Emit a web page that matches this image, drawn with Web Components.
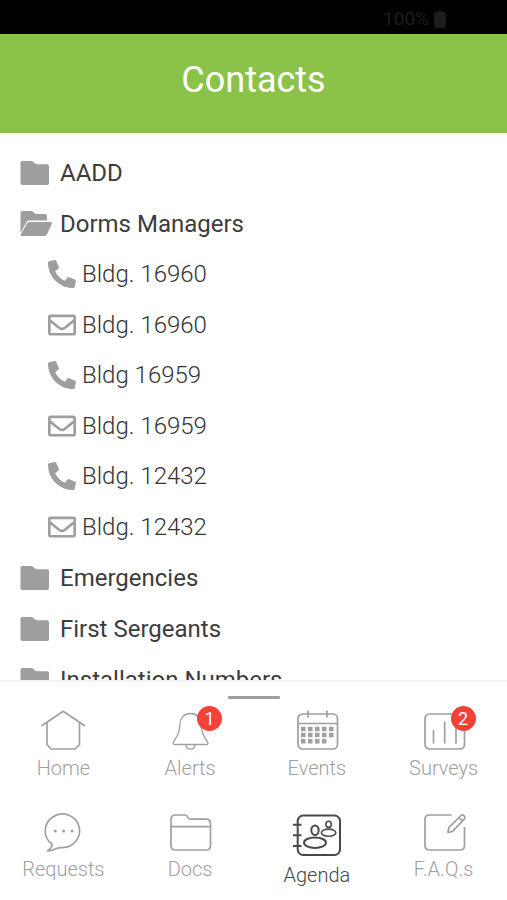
<!DOCTYPE html>
<html lang="en">
<head>
<meta charset="utf-8">
<meta name="viewport" content="width=device-width, initial-scale=1">
<title>Contacts</title>
<style>
body{margin:0;background:#fff;color:#333;font-family:Roboto,"Liberation Sans",sans-serif;font-weight:300}
</style>
</head>
<body>
<contacts-app></contacts-app>
<script>
const glyphs = {
  folder: ['0 0 32 26', '<path fill="currentColor" d="M2.500 1H11c1 0 1.700.300 2.400 1L15 3.500c.5.5 1 .7 1.800.7H27c1.200 0 2 .8 2 2V23c0 1.200-.8 2-2 2H2.500c-1.200 0-2-.8-2-2V3c0-1.200.8-2 2-2z"/>'],
  open: ['0 0 32 26', '<path fill="currentColor" d="M2.500 0H11c1 0 1.500.300 2.200 1L14.500 2.300c.5.5 1 .7 1.700.7H25c1.200 0 2 .8 2 2v4.500H9.500c-1.500 0-2.500.6-3.200 1.900L.5 22V2c0-1.200.8-2 2-2z"/><path fill="currentColor" d="M9.700 11H30.500c1.300 0 1.900.8 1.300 2L27 23.200C26.400 24.400 25.500 25 24.200 25H2c-1.200 0-1.700-.6-1.200-1.600L7 12.500C7.600 11.500 8.500 11 9.700 11z"/>'],
  phone: ['0 0 512 512', '<path fill="currentColor" d="M497.390 361.800l-112-48a24 24 0 0 0-28 6.900l-49.600 60.600A370.660 370.660 0 0 1 130.600 204.110l60.600-49.600a23.940 23.940 0 0 0 6.900-28l-48-112A24.160 24.160 0 0 0 122.600.61l-104 24A24 24 0 0 0 0 48c0 256.500 207.900 464 464 464a24 24 0 0 0 23.400-18.600l24-104a24.290 24.290 0 0 0-14.010-27.600z"/>'],
  mail: ['0 0 512 512', '<path fill="currentColor" d="M464 64H48C21.490 64 0 85.490 0 112v288c0 26.510 21.490 48 48 48h416c26.510 0 48-21.490 48-48V112c0-26.510-21.490-48-48-48zm0 48v40.805c-22.422 18.259-58.168 46.651-134.587 106.490-16.841 13.247-50.201 45.072-73.413 44.701-23.208.375-56.579-31.459-73.413-44.701C106.180 199.465 70.425 171.067 48 152.805V112h416zM48 400V214.398c22.914 18.251 55.409 43.862 104.938 82.646 21.857 17.205 60.134 55.186 103.062 54.955 42.717.231 80.509-37.199 103.053-54.947 49.528-38.783 82.032-64.401 104.947-82.653V400H48z"/>'],
  battery: ['0 0 12 18', '<path fill="currentColor" d="M3.500 1h5v1H10q2 0 2 2v12q0 2-2 2H2q-2 0-2-2V4q0-2 1.500-2h2z"/>'],
  home: ['0 0 52 42', '<path d="M4.500 17 26.200 2.300 48 17M10 14v21.500l4 4.500h24l4.500-4.500V14"/>'],
  bell: ['0 0 52 42', '<path stroke-width="1.300" d="M26.500 4.500C20 4.500 16.300 9 16 14.500c-.2 6.500-1 9.500-4 14.500-1.300 2.200-2.600 3.600-2.800 5-.1 1 .6 1.500 1.500 1.500H42.500c1 0 1.600-.6 1.400-1.500-.3-1.400-1.600-2.800-2.900-5-3-5-3.700-8-4-14.500C36.700 9 33 4.500 26.500 4.500zM22 36c0 5.500 9 5.500 9 0"/>'],
  events: ['0 0 52 42', '<rect x="7" y="5" width="39.500" height="35" rx="4.500"/><path d="M7 14.500h39.500M17 1.500v7M36 1.500v7"/><path stroke-width="4.500" stroke-dasharray="4.500 2.500" d="M10 20h33M10 26h33M10 32.200h26"/>'],
  surveys: ['0 0 52 42', '<rect x="7" y="5" width="39.500" height="35" rx="4.500"/><path d="M15.500 21v13.500M26.700 12.500v22M38 17v17.500"/>'],
  requests: ['0 0 52 42', '<path d="M15 34.200A17.200 16.800 0 1 1 24.500 37.600C20 37 17 41 10.500 40.800C13.500 38.500 15.600 36.500 15 34.200z"/><path stroke-linecap="round" stroke-width="3" d="M18.200 21h.01M26.500 21h.01M35 21h.01"/>'],
  docs: ['0 0 52 42', '<path d="M11.500 5H21c1.500 0 2.200.5 2.700 2 .5 1.600 1 2.200 2.600 2.200H42c3 0 4.500 1.500 4.500 4.500V35.500c0 3-1.500 4.500-4.500 4.500H11.500C8.500 40 7 38.500 7 35.500v-26C7 6.500 8.500 5 11.500 5zM7 16.700h39.500"/>'],
  agenda: ['0 0 52 48', '<g stroke-width="2"><rect x="6.700" y="5.500" width="42.300" height="39.500" rx="5.500"/><path d="M2 14.700h8.500M2 25.300h8.500M2 36h8.500"/><ellipse cx="24" cy="20.300" rx="3.700" ry="4.700"/><ellipse cx="24" cy="32.700" rx="11" ry="5.200"/></g><g stroke-width="1.600"><ellipse cx="37.600" cy="14.300" rx="2.700" ry="3.100"/><ellipse cx="37.600" cy="22.700" rx="7.200" ry="3.600"/></g>'],
  faqs: ['0 0 52 42', '<path d="M33.500 5H11.500C8.500 5 7 6.500 7 9.500v26C7 38.500 8.500 40 11.500 40H42c3 0 4.500-1.500 4.500-4.500V17"/><path d="M30 22.500l.8-4.800L42.500 6c2.600-2.600 6 .8 3.500 3.400L34.500 21.400zM41 7.500l3.500 3.500"/>']
};
const glyph = name => `<svg viewBox="${glyphs[name][0]}" aria-hidden="true">${glyphs[name][1]}</svg>`;

function define(tag, render, setup) {
  customElements.define(tag, class extends HTMLElement {
    connectedCallback() {
      if (this.shadowRoot) return;
      this.attachShadow({mode: 'open'}).innerHTML = render(this);
      if (setup) setup(this);
    }
  });
}

define('status-bar', () => `
  <style>
    :host{display:flex;justify-content:flex-end;align-items:center;gap:5px;height:34px;padding:3px 61px 0 0;box-sizing:border-box;background:#000;color:#1d1d1d;font-size:19px;font-weight:400;line-height:24px}
    svg{width:12px;height:18px;display:block}
  </style><slot></slot>${glyph('battery')}`);

define('title-bar', () => `
  <style>
    :host{display:block;background:#8bc34a;color:#fff;text-align:center}
    h1{margin:0;padding:22px 16px 29px;font-family:Roboto,"Liberation Sans",sans-serif;font-weight:400;font-size:36px;line-height:48px}
  </style><h1><slot></slot></h1>`);

define('contact-folder', el => `
  <style>
    :host{display:block}
    button{display:flex;align-items:center;gap:8px;width:100%;height:51px;padding:0 20px;border:0;background:none;font:inherit;font-weight:400;font-size:24px;line-height:32px;color:#3c3c3c;text-align:left;white-space:nowrap}
    svg{width:32px;height:26px;flex:none;color:#9e9e9e;overflow:visible}
  </style>
  <button type="button" aria-expanded="${el.hasAttribute('open')}">${glyph(el.hasAttribute('open') ? 'open' : 'folder')}<span>${el.getAttribute('name')}</span></button>
  <div ${el.hasAttribute('open') ? '' : 'hidden'}><slot></slot></div>`,
  el => {
    const button = el.shadowRoot.querySelector('button');
    button.addEventListener('click', () => {
      const open = button.getAttribute('aria-expanded') !== 'true';
      button.setAttribute('aria-expanded', open);
      el.shadowRoot.querySelector('div').hidden = !open;
      button.querySelector('svg').outerHTML = glyph(open ? 'open' : 'folder');
    });
  });

/* One building: a row that calls it and a row that writes to it. */
define('building-contact', el => `
  <style>
    :host{display:grid;grid-template-rows:50px 51px;padding-left:48px}
    a{display:flex;align-items:center;gap:6px;color:#333;text-decoration:none;font-size:24px;line-height:32px}
    svg{width:28px;height:28px;flex:none;color:#9e9e9e}
  </style>
  <a href="#call">${glyph('phone')}<span>${el.getAttribute('call')}</span></a>
  <a href="#mail">${glyph('mail')}<span>${el.getAttribute('mail')}</span></a>`);

define('nav-item', el => `
  <style>
    :host{display:block;color:#a0a0a0}
    :host([active]){color:#484848}
    a{display:flex;flex-direction:column;align-items:center;gap:5px;color:inherit;text-decoration:none;font-size:20px;line-height:24px}
    .icon{position:relative;width:52px;height:42px}
    :host([active]) .icon{height:48px}
    svg{display:block;width:100%;height:100%;fill:none;stroke:currentColor;stroke-width:1.700;stroke-linejoin:round;overflow:visible}
    .badge{position:absolute;left:33px;top:-3px;width:25px;height:25px;border-radius:50%;background:#f44336;color:#fff;font-size:18px;font-weight:400;line-height:25px;text-align:center}
  </style>
  <a href="#${el.getAttribute('icon')}"${el.hasAttribute('active') ? ' aria-current="page"' : ''}>
    <span class="icon">${glyph(el.getAttribute('icon'))}${el.hasAttribute('badge') ? `<span class="badge">${el.getAttribute('badge')}</span>` : ''}</span>
    <span><slot></slot></span>
  </a>`);

define('bottom-nav', () => `
  <style>
    :host{display:block;background:#fff;border-top:2px solid #f3f3f3;padding:14px 0 13px}
    .handle{width:52px;height:3px;margin:0 auto 10px;background:#9e9e9e;border-radius:1px}
    nav{display:grid;grid-template-columns:repeat(4,1fr);row-gap:30px}
  </style>
  <div class="handle"></div>
  <nav aria-label="Sections"><slot></slot></nav>`);

define('contacts-app', () => `
  <style>
    :host{display:flex;flex-direction:column;height:100vh}
    status-bar,title-bar,bottom-nav{flex:none}
    main{flex:1;min-height:0;overflow-y:auto;scrollbar-width:none;padding-top:14px;box-sizing:border-box}
  </style>
  <status-bar>100%</status-bar>
  <title-bar>Contacts</title-bar>
  <main>
    <contact-folder name="AADD"></contact-folder>
    <contact-folder name="Dorms Managers" open>
      <building-contact call="Bldg. 16960" mail="Bldg. 16960"></building-contact>
      <building-contact call="Bldg 16959" mail="Bldg. 16959"></building-contact>
      <building-contact call="Bldg. 12432" mail="Bldg. 12432"></building-contact>
    </contact-folder>
    <contact-folder name="Emergencies"></contact-folder>
    <contact-folder name="First Sergeants"></contact-folder>
    <contact-folder name="Installation Numbers"></contact-folder>
  </main>
  <bottom-nav>
    <nav-item icon="home">Home</nav-item>
    <nav-item icon="bell" badge="1">Alerts</nav-item>
    <nav-item icon="events">Events</nav-item>
    <nav-item icon="surveys" badge="2">Surveys</nav-item>
    <nav-item icon="requests">Requests</nav-item>
    <nav-item icon="docs">Docs</nav-item>
    <nav-item icon="agenda" active>Agenda</nav-item>
    <nav-item icon="faqs">F.A.Q.s</nav-item>
  </bottom-nav>`);
</script>
</body>
</html>
